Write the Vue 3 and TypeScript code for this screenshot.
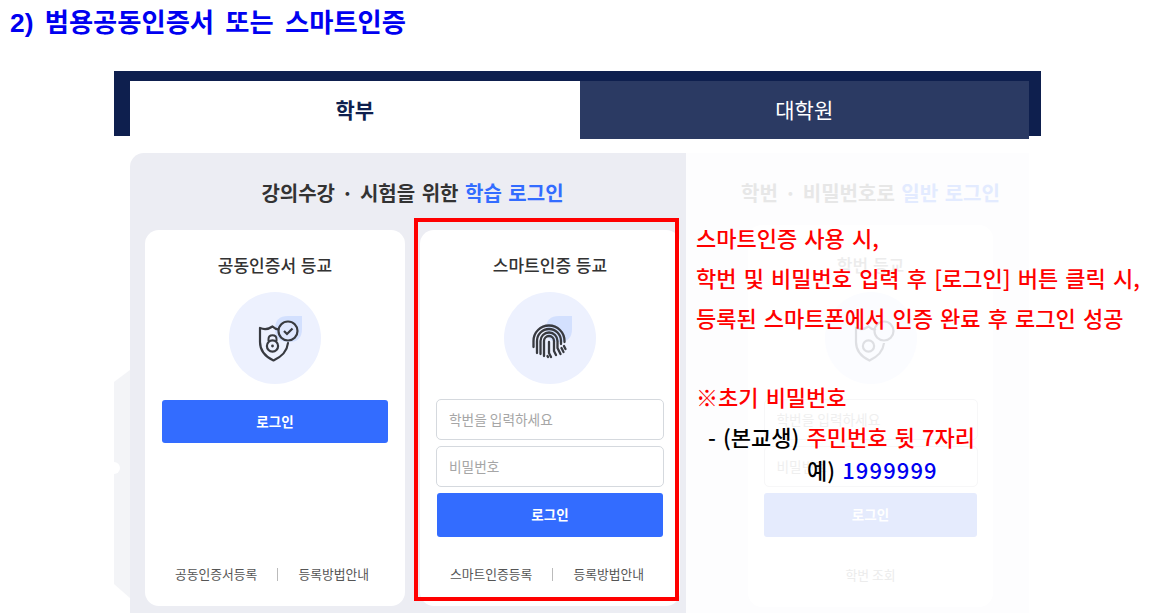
<script setup lang="ts">
const links = ["공동인증서등록", "등록방법안내"];
const smartLinks = ["스마트인증등록", "등록방법안내"];
</script>
<template>
  <div class="page">
    <h1 class="title">2) 범용공동인증서 또는 스마트인증</h1>
    <div class="shot">
      <div class="tabs">
        <div class="tab active">학부</div>
        <div class="tab">대학원</div>
      </div>
      <div class="panels">
        <svg class="decor" width="16" height="232" viewBox="0 0 16 232">
          <path d="M16 0 L0 12 L0 214 L16 228 Z" fill="#f3f4f7" />
          <circle cx="0" cy="98" r="6" fill="#fff" />
        </svg>
        <section class="panel study">
          <h2 class="heading">강의수강 · 시험을 위한 <em>학습 로그인</em></h2>
          <div class="cards">
            <div class="card">
              <h3>공동인증서 등교</h3>
              <div class="badge">
                <svg width="92" height="92" viewBox="0 0 92 92">
                  <path d="M46 37 Q46 24 59 24 L73 24 L73 37 Q73 50 60 50 Q46 50 46 37 Z" fill="#d3e0fe" />
                  <path d="M51 37 C48 38 46 37 43.500 34.500 C40 37 36 38 31 36 V50 C31 60 37 65 44.500 68.500 C52 65 58 60 59 51" fill="none" stroke="#383a40" stroke-width="2.2" stroke-linejoin="round" stroke-linecap="round" />
                  <circle cx="43.500" cy="54" r="5.600" fill="none" stroke="#383a40" stroke-width="2.2" />
                  <path d="M39.500 49 V47 C39.500 42 47.500 42 47.500 47 V49" fill="none" stroke="#383a40" stroke-width="2" />
                  <circle cx="43.500" cy="54" r="1.400" fill="#383a40" />
                  <circle cx="59" cy="39" r="9.500" fill="#dfe7fe" stroke="#383a40" stroke-width="2.2" />
                  <path d="M55 39 L58 42 L63.500 36.500" fill="none" stroke="#383a40" stroke-width="2.2" />
                </svg>
              </div>
              <button class="login">로그인</button>
              <div class="links">
                <span>{{ links[0] }}</span>
                <i></i>
                <span>{{ links[1] }}</span>
              </div>
            </div>
            <div class="card">
              <h3>스마트인증 등교</h3>
              <div class="badge">
                <svg width="92" height="92" viewBox="0 0 92 92">
                  <path d="M42 37 Q42 24 55 24 L68 24 L68 37 Q68 50 55 50 Q42 50 42 37 Z" fill="#d3e0fe" />
                  <g fill="none" stroke="#383a40" stroke-width="2.300" stroke-linecap="round">
                    <path d="M29.500 55 V49 A15.500 15.500 0 0 1 60.500 49 V50" />
                    <path d="M60 54 L61.500 57" />
                    <path d="M33 61 V49 A12 12 0 0 1 57 49 V52" />
                    <path d="M57.500 56 L59.500 60" />
                    <path d="M36.500 62 V49 A8.500 8.500 0 0 1 53.500 49 V56 L56.500 62" />
                    <path d="M40 64 V49 A5 5 0 0 1 50 49 V59 L52 63" />
                    <path d="M45 50 V61 L47 65" />
                    <path d="M43.500 64 L44 65" />
                  </g>
                </svg>
              </div>
              <input class="field first" placeholder="학번을 입력하세요" />
              <input class="field" placeholder="비밀번호" />
              <button class="login tight">로그인</button>
              <div class="links">
                <span>{{ smartLinks[0] }}</span>
                <i></i>
                <span>{{ smartLinks[1] }}</span>
              </div>
            </div>
          </div>
        </section>
        <section class="panel general">
          <h2 class="heading">학번 · 비밀번호로 <em>일반 로그인</em></h2>
          <div class="card">
            <h3>학번 등교</h3>
            <div class="badge">
              <svg width="92" height="92" viewBox="0 0 92 92">
                <path d="M51 37 C48 38 46 37 43.500 34.500 C40 37 36 38 31 36 V50 C31 60 37 65 44.500 68.500 C52 65 58 60 59 51" fill="none" stroke="#383a40" stroke-width="2.2" />
                <circle cx="43.500" cy="54" r="5.600" fill="none" stroke="#383a40" stroke-width="2.2" />
                <circle cx="59" cy="39" r="9.500" fill="none" stroke="#383a40" stroke-width="2.2" />
              </svg>
            </div>
            <input class="field first" placeholder="학번을 입력하세요" />
            <input class="field" placeholder="비밀번호" />
            <button class="login tight">로그인</button>
            <div class="links"><span>학번 조회</span></div>
          </div>
        </section>
      </div>
    </div>
    <div class="highlight"></div>
    <div class="note">
      <p>스마트인증 사용 시,</p>
      <p>학번 및 비밀번호 입력 후 [로그인] 버튼 클릭 시,</p>
      <p>등록된 스마트폰에서 인증 완료 후 로그인 성공</p>
      <p class="gap">※초기 비밀번호</p>
      <p class="dark indent">- (본교생) <b>주민번호 뒷 7자리</b></p>
      <p class="dark sample">예) <b class="blue">1999999</b></p>
    </div>
  </div>
</template>
<style>
html,
body {
  margin: 0;
  background: #fff;
  overflow: hidden;
}
</style>
<style scoped>
.page {
  position: relative;
  width: 1165px;
  height: 613px;
  overflow: hidden;
  font-family: "Noto Sans CJK KR", "Noto Sans", sans-serif;
  color: #333;
}

.title {
  margin: 0;
  padding: 7px 0 0 10px;
  height: 71px;
  box-sizing: border-box;
  font-family: "Liberation Sans", "Noto Sans CJK KR", sans-serif;
  font-size: 26.300px;
  line-height: 32px;
  font-weight: 700;
  word-spacing: 4px;
  color: #0000f0;
}

.shot {
  margin-left: 114px;
  width: 927px;
}

.tabs {
  display: flex;
  height: 65px;
  box-sizing: border-box;
  padding: 10px 12px 0 16px;
  background: #0e1f4e;
}

.tab {
  flex: 1;
  height: 58px;
  background: #2b3a63;
  color: #fff;
  font-size: 21px;
  line-height: 56px;
  text-align: center;
}

.tab.active {
  background: #fff;
  color: #0e1f4e;
  font-weight: 700;
}

.panels {
  position: relative;
  display: flex;
  margin: 17px 12px 0 16px;
}

.decor {
  position: absolute;
  left: -16px;
  top: 217px;
}

.panel {
  height: 470px;
  box-sizing: border-box;
}

.heading {
  margin: 0;
  font-size: 20px;
  line-height: 26px;
  font-weight: 700;
  word-spacing: 2px;
  text-align: center;
  color: #333;
}

.heading em {
  font-style: normal;
  color: #336cff;
}

.study {
  width: 556px;
  padding: 27px 6px 0 15px;
  background: #ecedf3;
  border-radius: 14px 0 0 0;
}

.cards {
  display: flex;
  gap: 15px;
  margin-top: 24px;
}

.card {
  display: flex;
  flex-direction: column;
  align-items: center;
  flex: 0 0 260px;
  height: 376px;
  box-sizing: border-box;
  padding: 24px 16px 0;
  background: #fff;
  border-radius: 14px;
}

.card h3 {
  margin: 0;
  font-size: 17px;
  line-height: 22px;
  font-weight: 500;
  word-spacing: 1px;
  color: #333;
}

.badge {
  flex: none;
  width: 92px;
  height: 92px;
  margin: 16px 0;
  border-radius: 50%;
  background: #edf1fe;
}

.field {
  flex: none;
  width: 228px;
  height: 41px;
  box-sizing: border-box;
  margin-bottom: 6px;
  padding: 0 12px 2px;
  border: 1px solid #d5d9de;
  border-radius: 5px;
  outline: none;
  font-family: inherit;
  font-size: 13.700px;
  background: #fff;
}

.field.first {
  margin-top: -1px;
}

.field::placeholder {
  color: #a6a6a6;
}

.login {
  flex: none;
  width: 226px;
  height: 43px;
  padding: 0 0 2px;
  border: 0;
  border-radius: 3px;
  background: #336cff;
  color: #fff;
  font-family: inherit;
  font-size: 13.500px;
  font-weight: 700;
}

.login.tight {
  height: 44px;
}

.links {
  display: flex;
  align-items: center;
  justify-content: center;
  gap: 20px;
  margin-top: auto;
  margin-right: 6px;
  margin-bottom: 22px;
  font-size: 12.800px;
  line-height: 20px;
  color: #555;
}

.links i {
  width: 1px;
  height: 13px;
  background: #bbb;
}

.general {
  flex: 1;
  padding: 27px 0 0;
  background: #fdfdfe;
}

.general .heading {
  color: #e7e7e7;
  margin-left: 26px;
}

.general .heading em {
  color: #e3ebff;
}

.general .card {
  width: 245px;
  height: 382px;
  margin: 19px 0 0 62px;
  padding-top: 29px;
}

.general h3,
.general .links {
  color: #ececec;
}

.general .links {
  margin-right: 0;
}

.general .badge {
  background: #fbfcff;
  margin-top: 16px;
}

.general .badge svg {
  opacity: 0.14;
}

.general .field {
  width: 214px;
  border-color: #f7f7f8;
}

.general .field::placeholder {
  color: #efefef;
}

.general .login {
  width: 213px;
  background: #e5ebfd;
}

.highlight {
  position: absolute;
  left: 414px;
  top: 218px;
  width: 265px;
  height: 383px;
  box-sizing: border-box;
  border: 4px solid #ff0000;
}

.note {
  position: absolute;
  left: 696px;
  top: 217px;
  font-size: 22px;
  line-height: 40px;
  font-weight: 500;
  word-spacing: 2.200px;
  color: #ff0000;
  white-space: nowrap;
}

.note p {
  margin: 0;
}

.note b {
  font-weight: 500;
}

.gap {
  margin-top: 39px !important;
}

.dark {
  color: #000;
}

.dark b {
  color: #ff0000;
}

.dark b.blue {
  color: #0000f0;
  letter-spacing: 1.100px;
}

.indent {
  padding-left: 12px;
}

.sample {
  padding-left: 111px;
  line-height: 32px;
  margin-top: -3px !important;
}
</style>
